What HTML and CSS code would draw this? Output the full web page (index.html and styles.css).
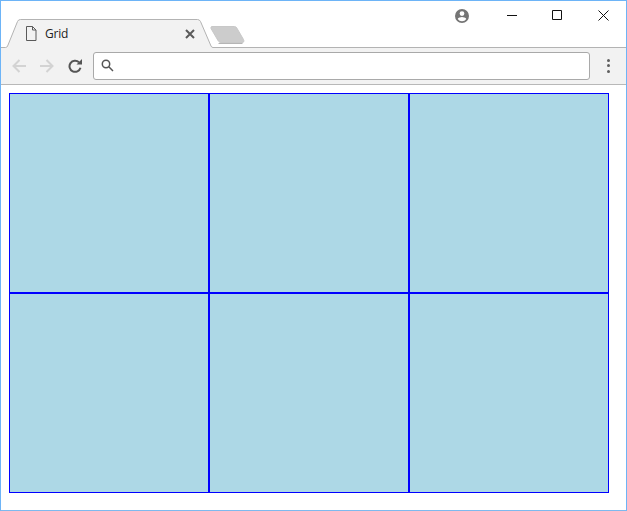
FILE: index.html
```html
<!DOCTYPE html>
<html lang="en">
<head>
<meta charset="utf-8">
<title>Grid</title>
<link rel="stylesheet" href="styles.css">
</head>
<body>
<div class="window">
  <header class="titlebar">
    <svg class="tabshape" width="625" height="47" viewBox="0 0 625 47">
      <path class="tab-fill" d="M0 46.5H4.500Q6 46.5 6.600 45L16.500 20.500Q17.300 18.500 19.500 18.500H196.500Q198.500 18.500 199.500 20.500L210 45Q210.600 46.500 212 46.500H625V48H0Z"/>
      <path class="tab-line" d="M0 46.5H4.500Q6 46.5 6.600 45L16.500 20.500Q17.300 18.500 19.500 18.500H196.500Q198.500 18.500 199.500 20.500L210 45Q210.600 46.500 212 46.500H625"/>
      <path class="newtab-shadow" d="M217.500 41.500H241.500"/>
      <path class="newtab" d="M211 25.500H233.500Q235 25.500 235.800 27L242.500 38.500Q243.800 41.500 241 41.500H220Q218.300 41.500 217.300 40L210 27.500Q209.500 25.500 211 25.500Z"/>
    </svg>
    <div class="tab">
      <svg class="fileicon" width="12" height="16" viewBox="0 0 12 16">
        <path d="M1.500 .5H7.500L11 4V14.500H1.500ZM7.500 .5V4H11"/>
      </svg>
      <span class="tab-title">Grid</span>
      <svg class="tabclose" width="10" height="10" viewBox="0 0 10 10">
        <path d="M1 1L9 9M9 1L1 9"/>
      </svg>
    </div>
    <div class="controls">
      <svg class="profile" width="14" height="14" viewBox="0 0 14 14">
        <path d="M7 0a7 7 0 1 0 0 14a7 7 0 0 0 0-14ZM7 2.200a2.400 2.400 0 1 1 0 4.800a2.400 2.400 0 0 1 0-4.800ZM7 12.200a5.300 5.300 0 0 1-4.300-2.300c.5-1.200 3-1.900 4.300-1.900s3.800.7 4.300 1.900A5.300 5.300 0 0 1 7 12.200Z"/>
      </svg>
      <div class="winbtns">
        <svg width="10" height="10" viewBox="0 0 10 10"><path d="M0 5.500H10"/></svg>
        <svg class="maxbtn" width="10" height="10" viewBox="0 0 10 10"><path d="M.5 .5H9.500V9.500H.5Z"/></svg>
        <svg width="11" height="11" viewBox="0 0 11 11"><path d="M.5 .5L10.500 10.500M10.500 .5L.5 10.500"/></svg>
      </div>
    </div>
  </header>
  <nav class="toolbar">
    <svg class="navicon dim" width="14" height="14" viewBox="0 0 14 14"><path d="M14 7H1.500M7.500 1L1.500 7L7.500 13"/></svg>
    <svg class="navicon dim" width="14" height="14" viewBox="0 0 14 14"><path d="M0 7H12.500M6.500 1L12.500 7L6.500 13"/></svg>
    <svg class="reload" width="14" height="14" viewBox="0 0 14 14">
      <path class="reload-arc" d="M12.500 8.800A5.600 5.600 0 1 1 11 3.200"/>
      <path class="reload-head" d="M8.500 5.500H14V0Z"/>
    </svg>
    <div class="omnibox">
      <svg class="search" width="13" height="13" viewBox="0 0 13 13">
        <circle cx="5" cy="5" r="3.700"/>
        <path d="M7.800 7.800L12 12"/>
      </svg>
    </div>
    <div class="menu"><i></i><i></i><i></i></div>
  </nav>
  <main class="content">
    <div class="grid">
      <div class="cell"></div>
      <div class="cell"></div>
      <div class="cell"></div>
      <div class="cell"></div>
      <div class="cell"></div>
      <div class="cell"></div>
    </div>
  </main>
</div>
</body>
</html>
```
FILE: styles.css
```css
html, body {
  margin: 0;
  padding: 0;
  background: #fff;
}

.window {
  box-sizing: border-box;
  width: 627px;
  height: 511px;
  border: 1px solid #6db4f7;
  border-bottom-color: #7db9ee;
  display: flex;
  flex-direction: column;
  overflow: hidden;
  font-family: "Open Sans", "Noto Sans", sans-serif;
}

.titlebar {
  position: relative;
  height: 47px;
  flex: none;
}

.tabshape {
  position: absolute;
  left: 0;
  top: 0;
}

.tab-fill { fill: #f2f2f2; }
.tab-line { fill: none; stroke: #b3b3b3; stroke-width: 1; }
.newtab { fill: #cccccc; stroke: #c8c8c8; stroke-width: 1; }
.newtab-shadow { fill: none; stroke: #b5b5b5; stroke-width: 1; transform: translateY(1px); }

.tab {
  position: absolute;
  left: 24px;
  top: 24px;
  width: 170px;
  height: 18px;
  display: flex;
  align-items: center;
}

.fileicon {
  flex: none;
  fill: none;
  stroke: #5a5a5a;
  stroke-width: 1;
}

.tab-title {
  margin-left: 8px;
  font-size: 12px;
  line-height: 18px;
  color: #222;
  flex: 1;
  letter-spacing: -0.2px;
}

.tabclose {
  flex: none;
  fill: none;
  stroke: #5a5a5a;
  stroke-width: 2;
}

.controls {
  position: absolute;
  right: 0;
  top: 0;
  display: flex;
}

.profile {
  fill: #757575;
  fill-rule: evenodd;
  margin: 8px 38px 0 0;
}

.winbtns {
  display: flex;
  gap: 35px;
  padding: 9px 17px 0 0;
  align-items: flex-start;
}

.maxbtn {
  margin-right: 1px;
}

.winbtns svg {
  fill: none;
  stroke: #111;
  stroke-width: 1;
}

.toolbar {
  box-sizing: border-box;
  flex: none;
  height: 37px;
  background: #f2f2f2;
  border-bottom: 1px solid #b8b8b8;
  display: flex;
  align-items: center;
  padding: 0 0 1px 11px;
}

.navicon {
  flex: none;
  fill: none;
  stroke-width: 2;
  margin-right: 14px;
}

.dim { stroke: #d3d3d3; }

.reload {
  flex: none;
  fill: none;
}

.reload-arc { stroke: #555; stroke-width: 2; fill: none; }
.reload-head { fill: #555; }

.omnibox {
  box-sizing: border-box;
  flex: none;
  width: 497px;
  height: 28px;
  margin-left: 11px;
  background: #fff;
  border: 1px solid #a9a9a9;
  border-radius: 3px;
  display: flex;
  align-items: center;
  padding-left: 7px;
}

.search {
  fill: none;
  stroke: #555;
  stroke-width: 1.500;
}

.menu {
  flex: none;
  margin-left: 17px;
  display: flex;
  flex-direction: column;
  gap: 2.500px;
}

.menu i {
  display: block;
  width: 3px;
  height: 3px;
  border-radius: 50%;
  background: #5f5f5f;
}

.content {
  flex: 1;
  padding: 8px;
}

.grid {
  display: grid;
  grid-template-columns: repeat(3, 200px);
  grid-auto-rows: 200px;
}

.cell {
  box-sizing: border-box;
  border: 1px solid #0000ff;
  background: #add8e6;
}
```
